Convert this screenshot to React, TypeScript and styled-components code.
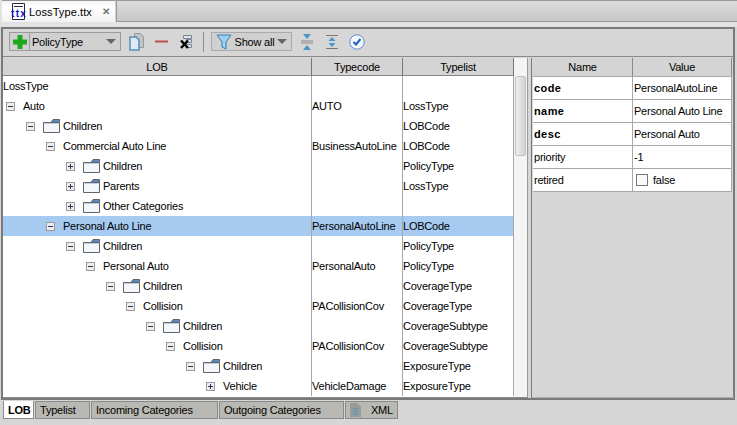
import styled, { createGlobalStyle } from "styled-components";

const GlobalStyle = createGlobalStyle`
  html, body {
    margin: 0;
    padding: 0;
    background: #d6d6d6;
  }
  body {
    font-family: "Liberation Sans", Arial, sans-serif;
    font-size: 11px;
    letter-spacing: -0.22px;
    color: #000;
  }
`;

const Window = styled.div`
  width: 737px;
  height: 425px;
  overflow: hidden;
  display: flex;
  flex-direction: column;
  background: #d6d6d6;
`;

const TabStrip = styled.div`
  height: 22px;
  flex: none;
  display: flex;
  padding-left: 2px;
  background: #e2e2e2;
`;

const FileTab = styled.div`
  width: 114px;
  height: 22px;
  flex: none;
  display: flex;
  align-items: center;
  gap: 3px;
  padding-left: 9px;
  box-sizing: border-box;
  background: linear-gradient(#f4f4f4, #ffffff 30%, #f2f2f2);
  border-top: 1px solid #9a9a9a;
  border-right: 1px solid #d0d0d0;
  letter-spacing: 0.1px;
`;

const CloseMark = styled.span`
  margin-left: 7px;
  color: #777;
  font-weight: 700;
  font-size: 10px;
`;

const EmptyTabArea = styled.div`
  flex: 1;
  box-sizing: border-box;
  background: linear-gradient(#dcdcdc, #c6c6c6);
  border: 1px solid #9a9a9a;
  border-right: 0;
`;

const TabBand = styled.div`
  height: 5px;
  flex: none;
  background: #e2e2e2;
`;

const Frame = styled.div`
  margin: 0 2px 0 1px;
  height: 373px;
  flex: none;
  box-sizing: border-box;
  border: 2px solid #7a7a7a;
  display: flex;
  flex-direction: column;
`;

const Toolbar = styled.div`
  height: 28px;
  flex: none;
  display: flex;
  align-items: center;
  padding: 0 0 2px 6px;
  box-sizing: border-box;
  border-bottom: 1px solid #8a8a8a;
`;

const TypeCombo = styled.div`
  display: flex;
  height: 19px;
  width: 112px;
  border: 1px solid #9b9b9b;
  box-sizing: border-box;
  background: #d0d0d0;
`;

const ComboIcon = styled.div`
  width: 19px;
  display: flex;
  align-items: center;
  justify-content: center;
  border-right: 1px solid #9b9b9b;
`;

const ComboLabel = styled.div`
  flex: 1;
  display: flex;
  align-items: center;
  justify-content: space-between;
  padding: 0 4px 0 2px;
`;

const Caret = styled.span`
  width: 0;
  height: 0;
  flex: none;
  border-left: 5px solid transparent;
  border-right: 5px solid transparent;
  border-top: 5px solid #666;
`;

const ToolIcon = styled.svg<{ $gap?: number }>`
  flex: none;
  margin-left: ${(p) => p.$gap ?? 0}px;
`;

const ToolDivider = styled.div`
  width: 1px;
  height: 20px;
  margin: 0 7px 0 11px;
  background: #8c8c8c;
`;

const FilterButton = styled.div`
  width: 81px;
  height: 19px;
  flex: none;
  display: flex;
  align-items: center;
  padding: 0 4px;
  box-sizing: border-box;
  border: 1px solid #aaa;
  background: #d0d0d0;
  justify-content: space-between;
  white-space: nowrap;
`;

const Panes = styled.div`
  flex: 1;
  min-height: 0;
  display: flex;
  padding-top: 1px;
`;

const TreePane = styled.div`
  width: 525px;
  flex: none;
  display: flex;
  background: #fff;
  border-bottom: 1px solid #8a8a8a;
  box-sizing: border-box;
`;

const TreeTable = styled.div`
  width: 511px;
  flex: none;
  overflow: hidden;
`;

const TreeRow = styled.div<{ $selected?: boolean }>`
  display: grid;
  grid-template-columns: 309px 91px 111px;
  height: 20px;
  align-items: stretch;
  background: ${(p) => (p.$selected ? "#a6caf0" : "transparent")};
`;

const HeadRow = styled(TreeRow)`
  height: 18px;
`;

const HeadCell = styled.div`
  display: flex;
  align-items: center;
  justify-content: center;
  height: 17px;
  background: #d4d4d4;
  border-right: 1px solid #777;
  border-bottom: 1px solid #888;
`;

const TreeCell = styled.div<{ $depth?: number; $root?: boolean }>`
  display: flex;
  align-items: center;
  white-space: nowrap;
  padding-left: ${(p) => (p.$root ? 0 : 3 + (p.$depth ?? 0) * 20)}px;
  border-right: 1px solid #a8a8a8;
`;

const PlainCell = styled.div`
  display: flex;
  align-items: center;
  white-space: nowrap;
  overflow: hidden;
  border-right: 1px solid #a8a8a8;
`;

const Expander = styled.span`
  width: 9px;
  height: 9px;
  flex: none;
  margin-right: 8px;
  position: relative;
  box-sizing: border-box;
  border: 1px solid #9a9a9a;
  background: #eee;

  &::before {
    content: "";
    position: absolute;
    left: 1px;
    top: 3px;
    width: 5px;
    height: 1px;
    background: #33335a;
  }
`;

const ExpanderPlus = styled(Expander)`
  &::after {
    content: "";
    position: absolute;
    left: 3px;
    top: 1px;
    width: 1px;
    height: 5px;
    background: #33335a;
  }
`;

const FolderIcon = styled.svg`
  flex: none;
  margin-right: 3px;
`;

const ScrollTrack = styled.div`
  width: 14px;
  flex: none;
  background: #f4f4f4;
  border-right: 1px solid #9a9a9a;
  box-sizing: border-box;
  padding-top: 18px;
`;

const ScrollThumb = styled.div`
  width: 11px;
  margin-left: 1px;
  height: 80px;
  border: 1px solid #c0c0c0;
  border-radius: 2px;
  box-sizing: border-box;
  background: linear-gradient(90deg, #f0f0f0, #d2d2d2);
`;

const Splitter = styled.div`
  width: 3px;
  flex: none;
  background: #d6d6d6;
  border-right: 1px solid #7a7a7a;
`;

const PropsPane = styled.div`
  flex: 1;
  padding: 0 2px 0 1px;
  border-bottom: 1px solid #b0b0b0;
`;

const PropsRow = styled.div`
  display: grid;
  grid-template-columns: 100px 99px;
  height: 23px;
  background: #fff;
  border-bottom: 1px solid #a8a8a8;
  box-sizing: border-box;
`;

const PropsHead = styled(PropsRow)`
  height: 19px;
  background: #d4d4d4;
`;

const PropsHeadCell = styled.div`
  display: flex;
  align-items: center;
  justify-content: center;
  border-right: 1px solid #8a8a8a;
`;

const PropsCell = styled.div<{ $bold?: boolean }>`
  display: flex;
  align-items: center;
  padding-left: 1px;
  white-space: nowrap;
  overflow: hidden;
  font-weight: ${(p) => (p.$bold ? 700 : 400)};
  letter-spacing: ${(p) => (p.$bold ? "0.4px" : "-0.22px")};
  border-right: 1px solid #a8a8a8;
`;

const CheckBox = styled.span`
  width: 12px;
  height: 12px;
  margin: 0 5px 0 2px;
  box-sizing: border-box;
  border: 1px solid #777;
  background: #fafafa;
`;

const BottomTabs = styled.div`
  display: flex;
  gap: 1px;
  height: 18px;
  margin: 1px 0 0 3px;
`;

const BottomTab = styled.div<{ $active?: boolean; $width: number }>`
  width: ${(p) => p.$width}px;
  height: 18px;
  flex: none;
  display: flex;
  align-items: center;
  gap: 10px;
  padding-left: 4px;
  box-sizing: border-box;
  background: ${(p) => (p.$active ? "#fff" : "#b9b9b3")};
  font-weight: ${(p) => (p.$active ? 700 : 400)};
  border: 1px solid #8a8a8a;
  border-top-width: ${(p) => (p.$active ? 0 : 1)}px;
`;

type Row = {
  label: string;
  depth?: number;
  kind?: "open" | "closed" | "root";
  folder?: boolean;
  typecode?: string;
  typelist: string;
  selected?: boolean;
};

const rows: Row[] = [
  { label: "LossType", kind: "root", typelist: "" },
  { label: "Auto", depth: 0, kind: "open", typecode: "AUTO", typelist: "LossType" },
  { label: "Children", depth: 1, kind: "open", folder: true, typelist: "LOBCode" },
  { label: "Commercial Auto Line", depth: 2, kind: "open", typecode: "BusinessAutoLine", typelist: "LOBCode" },
  { label: "Children", depth: 3, kind: "closed", folder: true, typelist: "PolicyType" },
  { label: "Parents", depth: 3, kind: "closed", folder: true, typelist: "LossType" },
  { label: "Other Categories", depth: 3, kind: "closed", folder: true, typelist: "" },
  { label: "Personal Auto Line", depth: 2, kind: "open", typecode: "PersonalAutoLine", typelist: "LOBCode", selected: true },
  { label: "Children", depth: 3, kind: "open", folder: true, typelist: "PolicyType" },
  { label: "Personal Auto", depth: 4, kind: "open", typecode: "PersonalAuto", typelist: "PolicyType" },
  { label: "Children", depth: 5, kind: "open", folder: true, typelist: "CoverageType" },
  { label: "Collision", depth: 6, kind: "open", typecode: "PACollisionCov", typelist: "CoverageType" },
  { label: "Children", depth: 7, kind: "open", folder: true, typelist: "CoverageSubtype" },
  { label: "Collision", depth: 8, kind: "open", typecode: "PACollisionCov", typelist: "CoverageSubtype" },
  { label: "Children", depth: 9, kind: "open", folder: true, typelist: "ExposureType" },
  { label: "Vehicle", depth: 10, kind: "closed", typecode: "VehicleDamage", typelist: "ExposureType" },
];

const properties = [
  { name: "code", value: "PersonalAutoLine", bold: true },
  { name: "name", value: "Personal Auto Line", bold: true },
  { name: "desc", value: "Personal Auto", bold: true },
  { name: "priority", value: "-1" },
];

const Folder = () => (
  <FolderIcon width="17" height="14" viewBox="0 0 17 14">
    <path d="M.5 3.5h16v10H.5z" fill="#f4f6fa" stroke="#5c6470" />
    <path d="M8 3.5 10 .5h6.5v3z" fill="#5f86bd" stroke="#5c6470" />
    <path d="M1.5 4.5h14" stroke="#c4cedd" />
  </FolderIcon>
);

const App = () => (
  <Window>
    <GlobalStyle />
    <TabStrip>
      <FileTab>
        <svg width="15" height="17" viewBox="0 0 15 17">
          <path d="M1.5.5h12v16h-12z" fill="#fff" stroke="#26264a" />
          <path d="M3 3.5h9" stroke="#26264a" />
          <text x="0" y="14" fontSize="10" fontWeight="700" fill="#1212c8" fontFamily="Liberation Sans" textLength="15">ttx</text>
        </svg>
        <span>LossType.ttx</span>
        <CloseMark>✕</CloseMark>
      </FileTab>
      <EmptyTabArea />
    </TabStrip>
    <TabBand />
    <Frame>
      <Toolbar>
        <TypeCombo>
          <ComboIcon>
            <svg width="14" height="14" viewBox="0 0 14 14">
              <path d="M4.5 0h5v4.5H14v5H9.500V14h-5V9.500H0v-5h4.500z" fill="#1ea81e" />
            </svg>
          </ComboIcon>
          <ComboLabel>
            PolicyType
            <Caret />
          </ComboLabel>
        </TypeCombo>
        <ToolIcon $gap={8} width="15" height="18" viewBox="0 0 15 18">
          <path d="M5.500.5h6l3 3v11h-9z" fill="#c4c4c4" stroke="#999" />
          <path d="M1 4h6l3 3v10H1z" fill="#dfe9f3" stroke="#5a8fb8" strokeWidth="1.5" />
        </ToolIcon>
        <ToolIcon $gap={11} width="13" height="3" viewBox="0 0 13 3">
          <path d="M0 1.500h13" stroke="#bb5048" strokeWidth="2" />
        </ToolIcon>
        <ToolIcon $gap={12} width="12" height="14" viewBox="0 0 12 14">
          <path d="M3.500.5h8v3h-8zM6.500 4.500h5v3h-5zM6.500 9.500h5v3h-5z" fill="#dce4ee" stroke="#7c8494" />
          <path d="M1 5.500 8 13M1 13l7-7.500" stroke="#000" strokeWidth="2.400" />
        </ToolIcon>
        <ToolDivider />
        <FilterButton>
          <svg width="16" height="16" viewBox="0 0 16 16">
            <path d="M1 1h14L10 8v7L6 13V8z" fill="#9fd0ee" stroke="#2f7fb5" />
          </svg>
          Show all
          <Caret />
        </FilterButton>
        <ToolIcon $gap={9} width="12" height="16" viewBox="0 0 12 16">
          <path d="M0 7h12M0 9h12" stroke="#8a8a8a" />
          <path d="M2 0h8L6 5zM2 16h8l-4-5z" fill="#4a95cc" />
        </ToolIcon>
        <ToolIcon $gap={13} width="12" height="14" viewBox="0 0 12 14">
          <path d="M0 .5h12M0 13.500h12" stroke="#777" />
          <path d="M6 2l3.500 4h-7zM6 12 2.500 8h7z" fill="#4a95cc" />
        </ToolIcon>
        <ToolIcon $gap={11} width="16" height="16" viewBox="0 0 16 16">
          <circle cx="8" cy="8" r="7.200" fill="#f4f8fd" stroke="#5c8fd0" />
          <path d="M4.500 8 7 10.500 11.500 5" fill="none" stroke="#1f5fc0" strokeWidth="2" />
        </ToolIcon>
      </Toolbar>
      <Panes>
        <TreePane>
          <TreeTable>
            <HeadRow>
              <HeadCell>LOB</HeadCell>
              <HeadCell>Typecode</HeadCell>
              <HeadCell>Typelist</HeadCell>
            </HeadRow>
            {rows.map((row, i) => (
              <TreeRow key={i} $selected={row.selected}>
                <TreeCell $depth={row.depth} $root={row.kind === "root"}>
                  {row.kind === "open" && <Expander />}
                  {row.kind === "closed" && <ExpanderPlus />}
                  {row.folder && <Folder />}
                  {row.label}
                </TreeCell>
                <PlainCell>{row.typecode}</PlainCell>
                <PlainCell>{row.typelist}</PlainCell>
              </TreeRow>
            ))}
          </TreeTable>
          <ScrollTrack>
            <ScrollThumb />
          </ScrollTrack>
        </TreePane>
        <Splitter />
        <PropsPane>
          <PropsHead>
            <PropsHeadCell>Name</PropsHeadCell>
            <PropsHeadCell>Value</PropsHeadCell>
          </PropsHead>
          {properties.map((prop) => (
            <PropsRow key={prop.name}>
              <PropsCell $bold={prop.bold}>{prop.name}</PropsCell>
              <PropsCell>{prop.value}</PropsCell>
            </PropsRow>
          ))}
          <PropsRow>
            <PropsCell>retired</PropsCell>
            <PropsCell>
              <CheckBox />
              false
            </PropsCell>
          </PropsRow>
        </PropsPane>
      </Panes>
    </Frame>
    <BottomTabs>
      <BottomTab $active $width={31}>LOB</BottomTab>
      <BottomTab $width={55}>Typelist</BottomTab>
      <BottomTab $width={127}>Incoming Categories</BottomTab>
      <BottomTab $width={125}>Outgoing Categories</BottomTab>
      <BottomTab $width={53}>
        <svg width="11" height="14" viewBox="0 0 11 14">
          <path d="M0 0h7l4 4v10H0z" fill="#9a9a96" />
          <path d="M3 6h5M3 8.500h5M3 11h5" stroke="#4a95cc" />
        </svg>
        XML
      </BottomTab>
    </BottomTabs>
  </Window>
);

export default App;
